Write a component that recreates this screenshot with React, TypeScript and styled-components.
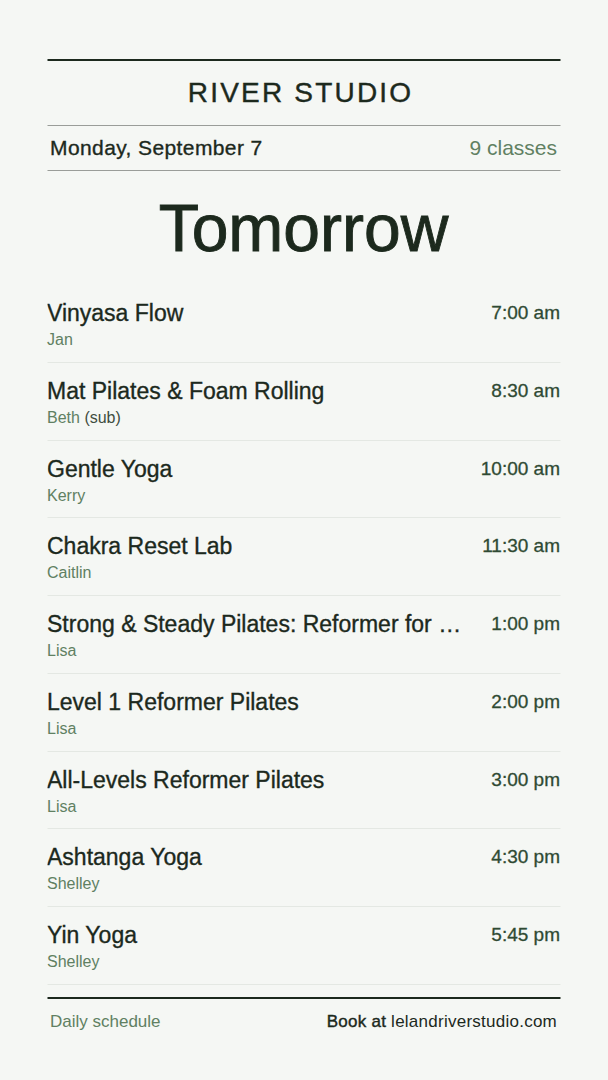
import styled, { createGlobalStyle } from "styled-components";

const GlobalStyle = createGlobalStyle`
  html, body {
    margin: 0;
    padding: 0;
    background: #f5f7f4;
  }
  body {
    font-family: "Liberation Sans", Arial, Helvetica, sans-serif;
    color: #1c291d;
  }
`;

type ClassItem = {
  name: string;
  teacher: string;
  note?: string;
  time: string;
};

const classes: ClassItem[] = [
  { name: "Vinyasa Flow", teacher: "Jan", time: "7:00 am" },
  { name: "Mat Pilates & Foam Rolling", teacher: "Beth", note: "(sub)", time: "8:30 am" },
  { name: "Gentle Yoga", teacher: "Kerry", time: "10:00 am" },
  { name: "Chakra Reset Lab", teacher: "Caitlin", time: "11:30 am" },
  {
    name: "Strong & Steady Pilates: Reformer for Beginners",
    teacher: "Lisa",
    time: "1:00 pm",
  },
  { name: "Level 1 Reformer Pilates", teacher: "Lisa", time: "2:00 pm" },
  { name: "All-Levels Reformer Pilates", teacher: "Lisa", time: "3:00 pm" },
  { name: "Ashtanga Yoga", teacher: "Shelley", time: "4:30 pm" },
  { name: "Yin Yoga", teacher: "Shelley", time: "5:45 pm" },
];

const App = () => {
  return (
    <>
      <GlobalStyle />
      <Style.Page>
        <Style.Header>
          <Style.Studio>RIVER STUDIO</Style.Studio>
        </Style.Header>
        <Style.DateRow>
          <Style.DateText>Monday, September 7</Style.DateText>
          <Style.Count>{`${classes.length} classes`}</Style.Count>
        </Style.DateRow>
        <Style.Day>Tomorrow</Style.Day>
        <Style.List>
          {classes.map((item) => (
            <Style.Row key={item.name}>
              <Style.Info>
                <Style.Name>{item.name}</Style.Name>
                <Style.Teacher>
                  {item.teacher}
                  {item.note && <Style.Note> {item.note}</Style.Note>}
                </Style.Teacher>
              </Style.Info>
              <Style.Time>{item.time}</Style.Time>
            </Style.Row>
          ))}
        </Style.List>
        <Style.Footer>
          <Style.FooterLabel>Daily schedule</Style.FooterLabel>
          <Style.FooterLink>
            <Style.Strong>Book at</Style.Strong> lelandriverstudio.com
          </Style.FooterLink>
        </Style.Footer>
      </Style.Page>
    </>
  );
};

export default App;

const Style = {
  Page: styled.div`
    width: 513px;
    margin: 0 auto;
    padding: 59px 0 0 0;
    transform: translateX(-0.5px);
  `,
  Header: styled.header`
    height: 64px;
    border-top: 2px solid #1c291d;
    border-bottom: 1px solid #9a9d99;
    display: flex;
    align-items: center;
    justify-content: center;
  `,
  Studio: styled.h1`
    margin: 0;
    font-size: 28px;
    line-height: 36px;
    font-weight: 400;
    letter-spacing: 2.2px;
    padding-right: 6px;
    color: #1c291d;
    -webkit-text-stroke: 0.4px #1c291d;
  `,
  DateRow: styled.div`
    height: 44px;
    padding: 0 3px;
    border-bottom: 1px solid #9a9d99;
    display: flex;
    align-items: center;
    justify-content: space-between;
  `,
  DateText: styled.span`
    font-size: 21px;
    line-height: 30px;
    letter-spacing: 0.4px;
    color: #1c291d;
    -webkit-text-stroke: 0.35px #1c291d;
  `,
  Count: styled.span`
    font-size: 21px;
    line-height: 30px;
    color: #608062;
  `,
  Day: styled.h2`
    margin: 0;
    height: 114px;
    display: flex;
    align-items: center;
    justify-content: center;
    font-size: 66px;
    font-weight: 400;
    letter-spacing: 0;
    color: #1c291d;
    -webkit-text-stroke: 0.9px #1c291d;
  `,
  List: styled.div`
    display: flex;
    flex-direction: column;
  `,
  Row: styled.div`
    display: flex;
    align-items: flex-start;
    gap: 24px;
    padding: 14px 0 10.75px 0;
    border-bottom: 1px solid #e4e8e3;
  `,
  Info: styled.div`
    flex: 1;
    min-width: 0;
    display: flex;
    flex-direction: column;
    gap: 1px;
  `,
  Name: styled.div`
    font-size: 23px;
    line-height: 28px;
    white-space: nowrap;
    overflow: hidden;
    text-overflow: ellipsis;
    color: #1c291d;
    -webkit-text-stroke: 0.35px #1c291d;
  `,
  Teacher: styled.div`
    font-size: 16px;
    line-height: 23px;
    color: #608062;
  `,
  Note: styled.span`
    color: #3f4d40;
  `,
  Time: styled.div`
    font-size: 19px;
    line-height: 28px;
    white-space: nowrap;
    color: #2f4a33;
    -webkit-text-stroke: 0.3px #2f4a33;
  `,
  Footer: styled.footer`
    margin-top: 12px;
    border-top: 2px solid #1c291d;
    padding: 11px 3px 0 3px;
    display: flex;
    justify-content: space-between;
    align-items: center;
  `,
  FooterLabel: styled.span`
    font-size: 17px;
    line-height: 24px;
    color: #608062;
  `,
  FooterLink: styled.span`
    font-size: 17px;
    line-height: 24px;
    letter-spacing: 0.25px;
    color: #1c291d;
  `,
  Strong: styled.span`
    -webkit-text-stroke: 0.4px #1c291d;
  `,
};
